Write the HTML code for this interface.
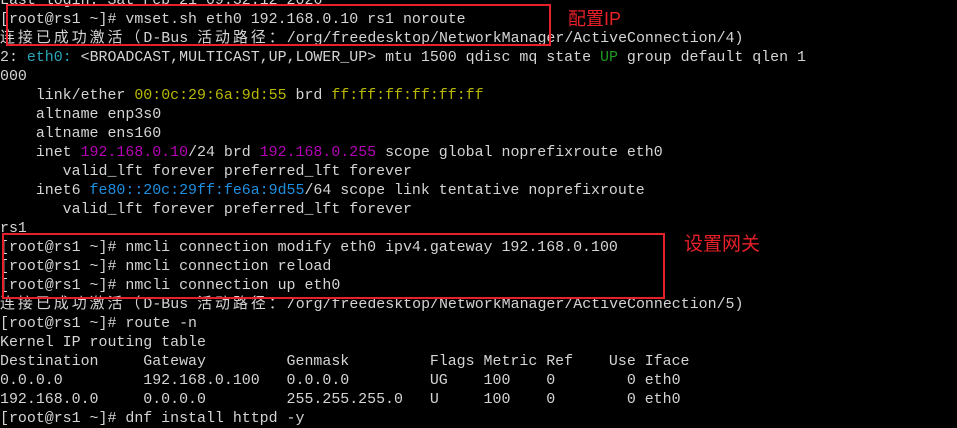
<!DOCTYPE html>
<html><head><meta charset="utf-8"><style>
html,body{margin:0;padding:0;background:#000;width:957px;height:428px;overflow:hidden;position:relative}
pre{position:absolute;left:0;top:-8px;margin:0;font-family:"Liberation Mono","Noto Sans CJK SC",monospace;font-size:14.93px;line-height:19px;color:#d4d4d4;white-space:pre}
.c{letter-spacing:3px}
.cy{color:#2aa7b8}.y{color:#b8b800}.m{color:#b400b4}.b{color:#1e8fe0}.g{color:#1f9b1f}
.box{position:absolute;border:2px solid #e8202a}
.lbl{position:absolute;color:#e8202a;font-family:"Liberation Sans","Noto Sans CJK SC",sans-serif;font-size:18px;line-height:20px}
</style></head><body>
<pre>Last login: Sat Feb 21 09:32:12 2026
[root@rs1 ~]# vmset.sh eth0 192.168.0.10 rs1 noroute
<span class="c">连接已成功激活（</span>D-Bus <span class="c">活动路径：</span>/org/freedesktop/NetworkManager/ActiveConnection/4)
2: <span class="cy">eth0:</span> &lt;BROADCAST,MULTICAST,UP,LOWER_UP&gt; mtu 1500 qdisc mq state <span class="g">UP</span> group default qlen 1
000
    link/ether <span class="y">00:0c:29:6a:9d:55</span> brd <span class="y">ff:ff:ff:ff:ff:ff</span>
    altname enp3s0
    altname ens160
    inet <span class="m">192.168.0.10</span>/24 brd <span class="m">192.168.0.255</span> scope global noprefixroute eth0
       valid_lft forever preferred_lft forever
    inet6 <span class="b">fe80::20c:29ff:fe6a:9d55</span>/64 scope link tentative noprefixroute
       valid_lft forever preferred_lft forever
rs1
[root@rs1 ~]# nmcli connection modify eth0 ipv4.gateway 192.168.0.100
[root@rs1 ~]# nmcli connection reload
[root@rs1 ~]# nmcli connection up eth0
<span class="c">连接已成功激活（</span>D-Bus <span class="c">活动路径：</span>/org/freedesktop/NetworkManager/ActiveConnection/5)
[root@rs1 ~]# route -n
Kernel IP routing table
Destination     Gateway         Genmask         Flags Metric Ref    Use Iface
0.0.0.0         192.168.0.100   0.0.0.0         UG    100    0        0 eth0
192.168.0.0     0.0.0.0         255.255.255.0   U     100    0        0 eth0
[root@rs1 ~]# dnf install httpd -y</pre>
<div class="box" style="left:6px;top:4px;width:541px;height:38px"></div>
<div class="box" style="left:2px;top:233px;width:659px;height:62px"></div>
<div class="lbl" style="left:568px;top:9px">配置IP</div>
<div class="lbl" style="left:684px;top:235px;font-size:19px">设置网关</div>
</body></html>
